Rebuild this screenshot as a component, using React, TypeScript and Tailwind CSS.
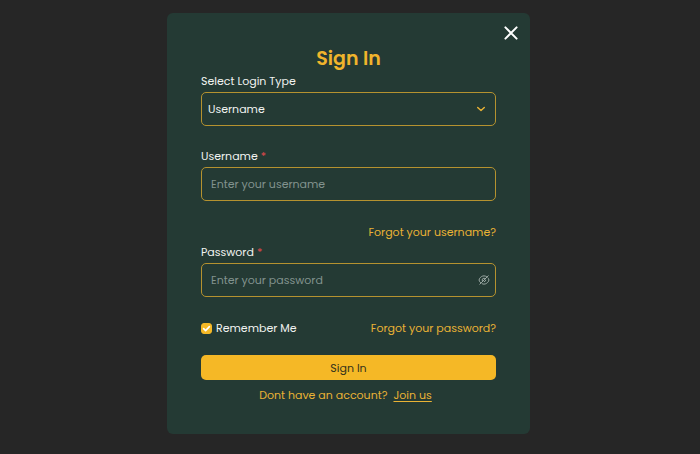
import { useState } from 'react';
import type { ReactNode } from 'react';

const FIELD =
  'w-full h-[34px] rounded-[5px] border border-[#b5922f] bg-transparent text-[11px] leading-5 outline-none focus:border-[#f5b826]';
const LINK = 'text-[#e9b235] hover:text-[#ffd05a]';

function CloseIcon() {
  return (
    <svg viewBox="0 0 14 14" className="w-3.5 h-3.5" fill="none" stroke="currentColor" strokeWidth="2" strokeLinecap="round">
      <path d="M1.4 1.4l11.2 11.2M12.6 1.4L1.4 12.6" />
    </svg>
  );
}

function ChevronIcon() {
  return (
    <svg viewBox="0 0 10 10" className="w-2.5 h-2.5" fill="none" stroke="currentColor" strokeWidth="1.4" strokeLinecap="round" strokeLinejoin="round">
      <path d="M1.7 3.4L5 6.6l3.3-3.2" />
    </svg>
  );
}

function EyeSlashIcon() {
  return (
    <svg viewBox="0 0 24 24" className="w-3 h-3" fill="none" stroke="currentColor" strokeWidth="1.8" strokeLinecap="round" strokeLinejoin="round">
      <path d="M14.53 9.47l-5.06 5.06a3.58 3.58 0 1 1 5.06-5.06z" />
      <path d="M17.82 5.77C16.07 4.45 14.07 3.73 12 3.73c-3.53 0-6.82 2.08-9.11 5.68-.9 1.41-.9 3.78 0 5.19.79 1.24 1.71 2.31 2.71 3.17" />
      <path d="M8.42 19.53c1.14.48 2.35.74 3.58.74 3.53 0 6.82-2.08 9.11-5.68.9-1.41.9-3.78 0-5.19-.33-.52-.69-1.01-1.06-1.47" />
      <path d="M15.51 12.7a3.57 3.57 0 0 1-2.82 2.82" />
      <path d="M9.47 14.53L3.6 20.4M20.4 3.6l-5.87 5.87" />
    </svg>
  );
}

function Label({ htmlFor, required, children }: { htmlFor: string; required?: boolean; children: ReactNode }) {
  return (
    <label htmlFor={htmlFor} className="block mb-px">
      {children}
      {required && <span className="ml-[3px] text-[#e5484d]">*</span>}
    </label>
  );
}

export default function App() {
  const [loginType, setLoginType] = useState('username');
  const [showPassword, setShowPassword] = useState(false);
  const [remember, setRemember] = useState(true);

  return (
    <div className="min-h-screen bg-[#262626] flex items-start justify-center pt-[13px] pr-[3px] pb-5 font-[Poppins,Inter,sans-serif]">
      <div
        role="dialog"
        aria-labelledby="title"
        className="relative w-full max-w-[363px] rounded-md bg-[#243a34] px-[34px] pt-[34px] pb-[29px] text-[11px] leading-5 text-[#f1f3f0]"
      >
        <button type="button" aria-label="Close" className="absolute top-[13px] right-3 text-white cursor-pointer">
          <CloseIcon />
        </button>

        <h1 id="title" className="text-center text-[19px] leading-6 font-semibold text-[#f0b42c]">Sign In</h1>

        <form onSubmit={(e) => e.preventDefault()}>
          <Label htmlFor="loginType">Select Login Type</Label>
          <div className="relative">
            <select
              id="loginType"
              value={loginType}
              onChange={(e) => setLoginType(e.target.value)}
              className={`${FIELD} appearance-none pl-1.5 pr-8`}
            >
              <option value="username">Username</option>
              <option value="email">Email</option>
            </select>
            <span className="absolute inset-y-0 right-2.5 flex items-center text-[#e9b235] pointer-events-none">
              <ChevronIcon />
            </span>
          </div>

          <div className="mt-5">
            <Label htmlFor="username" required>Username</Label>
            <input
              id="username"
              type="text"
              placeholder="Enter your username"
              className={`${FIELD} block px-[9px] placeholder:text-[#82938e]`}
            />
          </div>

          <div className="mt-[21px] text-right">
            <a href="#forgot-username" className={LINK}>Forgot your username?</a>
          </div>

          <Label htmlFor="password" required>Password</Label>
          <div className="relative">
            <input
              id="password"
              type={showPassword ? 'text' : 'password'}
              placeholder="Enter your password"
              className={`${FIELD} block pl-[9px] pr-8 placeholder:text-[#82938e]`}
            />
            <button
              type="button"
              aria-label="Show password"
              onClick={() => setShowPassword(!showPassword)}
              className="absolute inset-y-0 right-1.5 flex items-center text-[#a5b1ad] cursor-pointer"
            >
              <EyeSlashIcon />
            </button>
          </div>

          <div className="mt-[21px] flex items-center justify-between">
            <label className="flex items-center gap-1">
              <span className="relative flex">
                <input
                  type="checkbox"
                  checked={remember}
                  onChange={(e) => setRemember(e.target.checked)}
                  className="peer appearance-none w-[11px] h-[11px] rounded-[3px] border border-[#f5b826] checked:bg-[#f5b826]"
                />
                <svg
                  viewBox="0 0 11 11"
                  className="absolute inset-0 w-[11px] h-[11px] hidden peer-checked:block pointer-events-none"
                  fill="none"
                  stroke="white"
                  strokeWidth="1.6"
                  strokeLinecap="round"
                  strokeLinejoin="round"
                >
                  <path d="M2.6 5.6l2 2 3.8-4" />
                </svg>
              </span>
              Remember Me
            </label>
            <a href="#forgot-password" className={LINK}>Forgot your password?</a>
          </div>

          <button
            type="submit"
            className="mt-[17px] w-full h-[25px] rounded-[5px] bg-[#f5b826] text-[#33321c] hover:bg-[#ffc53d] cursor-pointer"
          >
            Sign In
          </button>
        </form>

        <p className="mt-[5px] text-center text-[#e9b235]">
          Dont have an account?
          <a href="#join" className="mx-1.5 underline underline-offset-2">Join us</a>
        </p>
      </div>
    </div>
  );
}
